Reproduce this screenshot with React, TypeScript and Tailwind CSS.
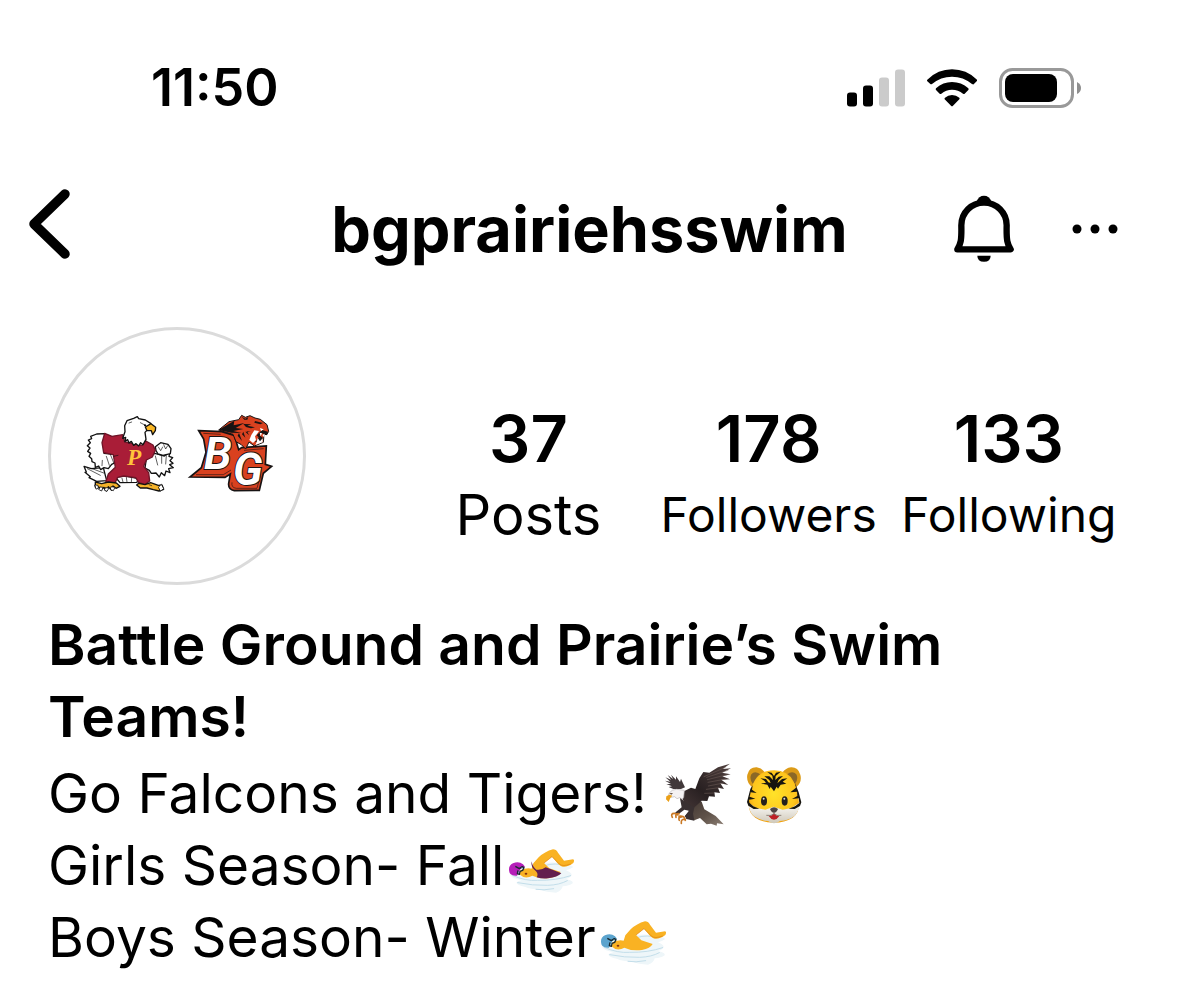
import type { ReactNode } from "react";

function SignalIcon() {
  return (
    <svg className="h-[38px] w-[58px]" viewBox="0 0 58 38" aria-hidden="true">
      <rect x="0" y="23.5" width="10" height="14" rx="3" fill="#000" />
      <rect x="16" y="16.500" width="10" height="21" rx="3" fill="#000" />
      <rect x="32" y="8.500" width="10" height="29" rx="3" fill="#cbcbcb" />
      <rect x="48" y="0.500" width="10" height="37" rx="3" fill="#cbcbcb" />
    </svg>
  );
}

function WifiIcon() {
  return (
    <svg className="h-[38px] w-[50px]" viewBox="289 56 150 114" aria-hidden="true">
      <path d="M290 88 Q322 57 364 57 Q407 57 439 88 Q440 91 438 93 L429 102 Q427 103 424 101 Q398 79 364 79 Q330 79 304 101 Q301 103 299 101 L290 93 Q288 90 290 88Z" />
      <path d="M316 114 Q337 95 364 95 Q392 95 413 114 Q415 117 413 119 L402 130 Q400 132 397 130 Q383 118 364 118 Q346 118 332 130 Q329 132 327 130 L316 119 Q314 117 316 114Z" />
      <path d="M343 142 Q352 134 364 134 Q377 134 386 142 Q388 145 386 147 L367 166 Q364 169 361 166 L342 147 Q340 145 343 142Z" />
    </svg>
  );
}

function BatteryIcon() {
  return (
    <svg className="h-[40px] w-[83px]" viewBox="0 0 83 40" aria-hidden="true">
      <rect x="1.500" y="1.500" width="72" height="37" rx="12" fill="#fff" stroke="#999" strokeWidth="3" />
      <rect x="6" y="6" width="52" height="28" rx="8" />
      <path d="M78 14 Q82 16 82 20 Q82 24 78 26Z" fill="#8e8e8e" />
    </svg>
  );
}

function BackIcon() {
  return (
    <svg className="h-[80px] w-[44px]" viewBox="0 0 44 80" aria-hidden="true">
      <path d="M37 5 L6 35 L37 65" fill="none" stroke="#000" strokeWidth="9.500" strokeLinecap="round" strokeLinejoin="round" />
    </svg>
  );
}

function BellIcon() {
  return (
    <svg className="h-[68px] w-[60px]" viewBox="72 43 180 204" aria-hidden="true">
      <path d="M82 206 C92 190 95 180 94 134 C94 96 124 66 162 66 C200 66 230 96 230 134 C229 180 232 190 242 206Z" fill="none" stroke="#000" strokeWidth="19" strokeLinejoin="round" />
      <path d="M140 62 Q146 45 162 45 Q178 45 184 62 L186 70 L138 70Z" />
      <path d="M142 225 H182 Q182 243 162 243 Q142 243 142 225Z" />
    </svg>
  );
}

function MoreIcon() {
  return (
    <svg className="h-[10px] w-[46px]" viewBox="0 0 46 10" aria-hidden="true">
      <circle cx="5" cy="5" r="4.500" />
      <circle cx="23" cy="5" r="4.500" />
      <circle cx="41" cy="5" r="4.500" />
    </svg>
  );
}

function FalconMascot() {
  return (
    <svg className="h-[95px] w-[105px]" viewBox="0 0 315 285" role="img" aria-label="Prairie Falcons">
      <g stroke="#111" strokeWidth="4" strokeLinejoin="round" strokeLinecap="round">
        <path fill="#fff" d="M82 188 L46 191 L24 184 L31 201 L27 202 L43 215 L39 218 L62 229 L92 227Z" />
        <path fill="#fff" d="M86 86 L62 87 L44 94 L47 101 L37 105 L43 113 L34 122 L42 129 L35 139 L44 145 L39 154 L47 161 L48 170 L57 174 L58 187 L68 183 L74 194 L84 188 L97 191 L107 178 L122 171 L114 148 L84 145Z" />
        <path fill="#fff" d="M236 145 L251 149 L265 153 L282 140 L279 154 L290 158 L282 167 L291 175 L281 179 L292 188 L278 191 L282 203 L270 198 L266 212 L256 203 L250 216 L240 204 L226 205 L220 196 L207 189 L211 162Z" />
        <path fill="#fff" d="M238 125 L254 113 L276 118 L285 131 L283 146 L261 151 L246 147 L240 137Z" />
        <path fill="#fff" d="M118 216 L150 213 L187 221 L183 232 L132 233Z" />
        <path fill="#a91d37" stroke="#6d1427" d="M86 85 L108 94 L140 89 L146 111 L199 121 L207 107 L231 120 L238 136 L229 156 L211 165 L203 184 L218 203 L221 228 L206 239 L188 232 L179 218 L143 213 L125 217 L117 234 L88 235 L97 207 L118 187 L112 149 L83 143 L78 113Z" />
        <path fill="#fff" d="M146 62 L153 47 L173 40 L184 35 L188 41 L208 45 L224 55 L220 68 L207 82 L210 103 L201 119 L194 113 L188 123 L180 116 L173 121 L166 109 L159 114 L155 104 L147 109 L149 97 L140 100 L147 80Z" />
        <path fill="#f9b624" d="M208 66 L225 56 L239 67 L238 77 L230 89 L226 77 L213 77Z" />
        <path fill="#f4b32b" d="M58 231 L77 236 L97 231 L121 234 L132 244 L120 250 L111 243 L107 256 L97 245 L91 258 L84 247 L75 254 L68 246 L58 246Z" />
        <path fill="#f4b32b" d="M188 235 L207 239 L224 233 L247 241 L258 240 L263 253 L249 258 L232 254 L213 249 L193 249 L182 240Z" />
        <path fill="none" strokeWidth="2" d="M103 148 L113 173 M91 154 L100 181 M79 166 L78 182 M126 151 L113 154 M34 191 L73 211 M46 190 L83 204 M238 153 L245 180 M257 153 L257 175 M271 152 L269 177 M247 126 L254 137 L260 126 M263 119 L269 132 L275 122 M193 53 L210 62 M159 54 L167 51 M138 220 L141 231 M151 217 L153 231 M167 219 L166 231 M219 239 L227 242" />
        <path fill="#fff" strokeWidth="2.500" d="M57 240 L66 241 L67 250 L61 252Z M73 246 L81 247 L77 258 L69 254Z M89 248 L99 249 L93 259 L86 256Z M106 245 L117 247 L112 257 L104 254Z M248 246 L256 238 L263 251 L254 258Z" />
      </g>
      <circle cx="207" cy="61" r="3" />
      <text x="153" y="180" fontFamily="Liberation Serif, serif" fontSize="70" fontStyle="italic" fontWeight="700" fill="#ffc33b">P</text>
    </svg>
  );
}

function TigerEmblem() {
  return (
    <svg className="h-[95px] w-[95px]" viewBox="0 0 285 285" role="img" aria-label="Battle Ground Tigers">
      <path fill="#d9411f" stroke="#171313" strokeWidth="5" d="M44 77 L113 80 L151 91 L164 134 L173 128 L247 123 L244 178 L263 184 L238 205 L226 256 L151 257 Q132 253 134 235 L139 207 L123 217 L18 216 L52 188 L66 142 L59 102Z" />
      <path fill="none" stroke="#2a1512" strokeWidth="2" d="M58 85 L110 88 M239 131 L180 136 M36 209 L118 209 L141 195 M144 232 Q141 248 157 250 H219 L230 207" />
      <g fontFamily="Roboto, sans-serif" fontWeight="700" fontStyle="italic" fill="#fff" stroke="#1b1414" strokeWidth="6" strokeLinejoin="miter" paintOrder="stroke">
        <text x="60" y="191" fontSize="134">B</text>
        <text x="147" y="240" fontSize="134">G</text>
      </g>
      <path fill="#d9411f" stroke="#171313" strokeWidth="3" d="M104 75 L135 50 L164 44 L173 31 L184 37 L198 32 L213 39 L229 43 L249 59 L254 79 L249 88 L240 89 L238 112 L211 123 L195 111 L185 132 L172 119 L156 110 L147 88Z" />
      <g fill="#171313">
        <path d="M104 75 L151 47 L149 61 L181 54 L155 69 L178 72 L148 78 L172 84 L142 83Z" />
        <path d="M173 35 L184 41 L193 36 L190 44 L181 44Z M178 57 L202 58 L190 62 L213 67 L201 70 L186 66Z M201 80 L189 78 L195 91 L184 80Z M178 80 L184 98 L174 88Z M165 84 L174 108 L161 92Z M213 48 L237 54 L229 58 L211 53Z M234 75 L252 80 L249 91 L232 84 L227 91 L237 99 L232 112 L212 111 L220 105 L224 97 L218 91Z" />
      </g>
      <g fill="#fff">
        <path d="M211 76 L225 78 L219 87 L213 94 L216 105 L207 114 L196 105 L202 90Z M228 69 L239 73 L231 78Z M227 83 L234 85 L230 94Z M235 90 L242 86 L241 98Z M218 111 L221 99 L228 109 L236 100 L236 112 L214 120Z" />
      </g>
    </svg>
  );
}

function EagleEmoji() {
  return (
    <svg className="ml-px inline-block h-[66px] w-[69px] align-[-15px]" viewBox="12 18 207 198" role="img" aria-label="Eagle">
      <defs>
        <linearGradient id="wing" x1="1" y1="0" x2="0" y2="1">
          <stop offset="0" stopColor="#51413f" />
          <stop offset="0.600" stopColor="#282021" />
          <stop offset="1" stopColor="#453737" />
        </linearGradient>
        <linearGradient id="tail" x1="0" y1="0" x2="1" y2="1">
          <stop offset="0" stopColor="#3d322e" />
          <stop offset="0.600" stopColor="#5f5249" />
          <stop offset="1" stopColor="#8d8075" />
        </linearGradient>
      </defs>
      <path fill="#41383a" d="M78 94 L66 99 L43 99 L29 93 L39 91 L22 84 L36 84 L18 74 L34 77 L19 64 L36 71 L26 57 L42 69 L36 56 L51 71 L51 61 L63 78 L66 68 L72 82Z" />
      <path fill="url(#tail)" d="M106 128 L128 137 L136 160 L170 180 L194 205 L174 202 L173 209 L156 203 L143 205 L123 186 L106 193 L87 188 L77 181 L90 166 L82 149Z" />
      <path fill="url(#wing)" d="M64 111 L96 95 L109 99 L121 67 L133 48 L151 50 L177 34 L213 23 L191 39 L216 37 L189 50 L215 55 L190 61 L213 70 L187 71 L208 87 L184 82 L195 99 L177 95 L183 111 L166 109 L168 122 L150 121 L145 135 L128 134 L105 155 L78 147Z" />
      <path fill="none" stroke="#75625d" strokeWidth="1.500" strokeLinecap="round" d="M135 62 L199 34 M143 64 L207 43 M145 71 L205 56 M147 79 L201 69 M148 90 L194 81 M142 100 L181 95 M137 112 L165 111" />
      <path fill="#393031" d="M62 122 L74 135 L93 146 L106 154 L102 173 L106 194 L82 189 L78 180 L90 164 L76 161 L59 174 L48 170 L68 154Z" />
      <path fill="#f5f2f3" stroke="#b9b3b5" strokeWidth="2" d="M30 112 Q39 99 53 100 L76 103 L74 124 L70 130 L62 125 L54 128 L47 122 L36 124 L29 118Z" />
      <path fill="#eba018" d="M31 116 L40 119 L34 126 L29 138 L21 130 L22 121Z" />
      <path fill="#5f4b3d" d="M31 112 L42 111 L37 116Z" />
      <path fill="none" stroke="#c97824" strokeWidth="5" strokeLinecap="round" strokeLinejoin="round" d="M40 184 Q34 172 46 172 L57 177 M51 184 Q48 173 60 173 M60 187 Q58 176 74 182 L79 193 M61 193 Q56 184 68 183 M67 202 Q65 188 79 190" />
    </svg>
  );
}

function TigerEmoji() {
  return (
    <svg className="ml-[14px] inline-block h-[60px] w-[56px] align-[-12px]" viewBox="258 26 168 180" role="img" aria-label="Tiger face">
      <defs>
        <radialGradient id="fur" cx="0.500" cy="0.450" r="0.650">
          <stop offset="0" stopColor="#ffe229" />
          <stop offset="0.650" stopColor="#ffc61d" />
          <stop offset="1" stopColor="#e58a0b" />
        </radialGradient>
        <linearGradient id="muzzle" x1="0" y1="0" x2="0" y2="1">
          <stop offset="0" stopColor="#fff" />
          <stop offset="1" stopColor="#cfc8b8" />
        </linearGradient>
      </defs>
      <path fill="#dc9b17" d="M276 92 Q258 78 262 55 Q268 32 290 33 Q306 35 315 49 L304 76Z M409 92 Q427 78 421 55 Q414 32 393 33 Q377 35 367 49 L380 78Z" />
      <path fill="#8b6827" d="M278 82 Q267 67 274 54 Q285 41 304 56Z M405 82 Q416 68 409 54 Q397 41 380 55Z" />
      <path fill="url(#fur)" d="M342 42 Q384 42 401 76 Q413 101 414 122 Q425 164 398 184 Q374 199 342 199 Q307 199 286 184 Q259 165 268 122 Q271 96 285 71 Q302 42 342 42Z" />
      <path fill="url(#muzzle)" d="M265 139 L289 155 L316 160 L341 151 L368 160 L394 155 L420 138 Q418 165 404 179 Q386 192 360 194 Q351 201 342 201 Q333 201 324 194 Q300 192 282 180 Q267 167 265 139Z" />
      <g fill="#17150f">
        <path d="M342 105 L332 91 L329 98 L322 85 L303 82 L318 79 L313 73 L301 66 L318 68 L325 78 L332 80 L328 71 L313 60 L328 60 L339 71 L337 58 L322 47 L335 49 L342 59 L348 49 L362 46 L347 59 L346 71 L356 61 L369 59 L356 71 L352 81 L366 68 L382 66 L368 76 L379 82 L362 85 L354 97 L350 91Z" />
        <path d="M278 87 L276 100 L290 110 L272 108 L269 121 L286 127 L267 130 L268 139 L280 150 L298 157 L281 158 L265 148 L261 137 L271 98Z" />
        <path d="M404 78 L408 94 L391 108 L411 106 L412 119 L396 128 L416 126 L418 140 L405 150 L386 157 L404 158 L420 149 L424 138 L416 108Z" />
      </g>
      <ellipse cx="312" cy="134" rx="9" ry="14" fill="#25201c" />
      <ellipse cx="374" cy="134" rx="9" ry="14" fill="#25201c" />
      <circle cx="311" cy="127" r="3" fill="#ddd" />
      <circle cx="373" cy="127" r="3" fill="#ddd" />
      <path fill="#4e4544" d="M330 158 Q342 148 354 158 Q350 169 342 169 Q334 169 330 158Z" />
      <path fill="#bd2026" d="M326 179 Q335 180 342 172 Q350 180 358 179 Q352 189 342 190 Q332 189 326 179Z" />
      <path fill="none" stroke="#645149" strokeWidth="2" d="M342 168 V173 M319 177 Q335 180 342 172 Q350 180 364 177" />
    </svg>
  );
}

function SwimmerEmoji({ cap, suit, label }: { cap: string; suit?: string; label: string }) {
  return (
    <svg className="ml-1 inline-block h-[48px] w-[68px] align-[-11px]" viewBox="20 34 204 144" role="img" aria-label={label}>
      <path fill="#eef6f9" d="M26 115 Q50 106 76 103 L110 82 Q150 74 177 80 Q204 82 216 91 Q206 98 194 101 Q212 108 211 116 Q206 124 194 127 Q218 133 214 140 Q204 148 184 149 Q182 162 164 168 Q136 168 114 158 Q88 158 70 150 Q48 146 45 138 Q50 132 60 131 Q34 126 26 115Z" />
      <path fill="none" stroke="#c3deea" strokeWidth="3" strokeLinecap="round" d="M33 116 Q73 134 109 131 Q164 132 208 117 M49 138 Q94 147 139 146 Q174 145 198 132 M104 158 Q126 162 157 156 M130 87 Q163 76 190 88" />
      <path fill="#f9b223" d="M58 100 Q78 92 91 96 L96 80 L112 62 Q130 45 155 38 Q164 38 170 48 L188 72 L215 68 Q221 70 216 79 Q198 92 184 90 Q173 87 163 73 L152 60 L128 79 L144 95 L178 106 Q171 119 146 124 Q115 128 93 117 Q80 125 66 121 L53 112Z" />
      <path fill="none" stroke="#dd8212" strokeWidth="2" d="M128 79 L152 60 L174 82 Q184 91 208 82" />
      {suit && <path fill={suit} d="M91 74 Q93 90 105 99 Q123 101 133 92 Q158 101 180 110 Q169 122 140 125 Q122 127 106 122 Q112 112 104 104 Q87 91 91 74Z" />}
      <path fill={cap} d="M25 109 Q18 88 35 80 Q52 72 65 83 L71 90 L58 96 L47 117 Q31 118 25 109Z" />
      <path fill="none" stroke="#18292e" strokeWidth="4" strokeLinejoin="round" d="M42 89 L54 96 L63 90 L68 93 L64 101 L56 104 L54 113 L48 111 L50 101" />
      <path fill="none" stroke="#69b7ce" strokeWidth="2" d="M59 94 L65 95 M50 106 L54 107" />
      <ellipse cx="74" cy="111" rx="4" ry="3" fill="#83300e" />
    </svg>
  );
}

function Stat({ value, children }: { value: string; children: ReactNode }) {
  return (
    <a href="#" className="flex flex-col items-center gap-1 leading-[72px]">
      <span className="text-[65px] font-semibold">{value}</span>
      {children}
    </a>
  );
}

export default function App() {
  return (
    <div className="bg-white pt-[58px] pb-8 font-['Inter',sans-serif] text-black">
      <div className="flex items-center justify-between pr-[97px] pl-[151px]">
        <time className="text-[52px] leading-[60px] font-semibold">11:50</time>
        <div className="flex items-center gap-[22px]">
          <SignalIcon />
          <WifiIcon />
          <BatteryIcon />
        </div>
      </div>

      <header className="mt-[71px] grid grid-cols-[1fr_auto_1fr] items-center px-7">
        <button type="button" aria-label="Back" className="justify-self-start">
          <BackIcon />
        </button>
        <h1 className="text-[63px] leading-[80px] font-bold">bgprairiehsswim</h1>
        <div className="flex items-center justify-end gap-[58px] pr-[33px]">
          <button type="button" aria-label="Notifications">
            <BellIcon />
          </button>
          <button type="button" aria-label="More options">
            <MoreIcon />
          </button>
        </div>
      </header>

      <main className="mt-[58px] px-12">
        <section className="flex items-start justify-between pr-0.5">
          <div className="flex size-[258px] shrink-0 items-center justify-center gap-[3px] rounded-full border-3 border-[#dbdbdb] pb-2">
            <FalconMascot />
            <TigerEmblem />
          </div>
          <div className="grid w-2/3 grid-cols-3 pt-[76px]">
            <Stat value="37">
              <span className="text-[56px]">Posts</span>
            </Stat>
            <Stat value="178">
              <span className="text-[48px]">Followers</span>
            </Stat>
            <Stat value="133">
              <span className="text-[48px]">Following</span>
            </Stat>
          </div>
        </section>

        <section className="mt-6 leading-[72px]">
          <h2 className="max-w-[960px] text-[57px] font-semibold">Battle Ground and Prairie’s Swim Teams!</h2>
          <div className="mt-1 text-[55px]">
            <p className="h-[72px]">
              Go Falcons and Tigers! <EagleEmoji />
              <TigerEmoji />
            </p>
            <p className="h-[72px]">
              Girls Season- Fall
              <SwimmerEmoji cap="#b51eb8" suit="#63204f" label="Woman swimming" />
            </p>
            <p className="h-[72px]">
              Boys Season- Winter
              <SwimmerEmoji cap="#5ba4ce" label="Man swimming" />
            </p>
          </div>
        </section>
      </main>
    </div>
  );
}
